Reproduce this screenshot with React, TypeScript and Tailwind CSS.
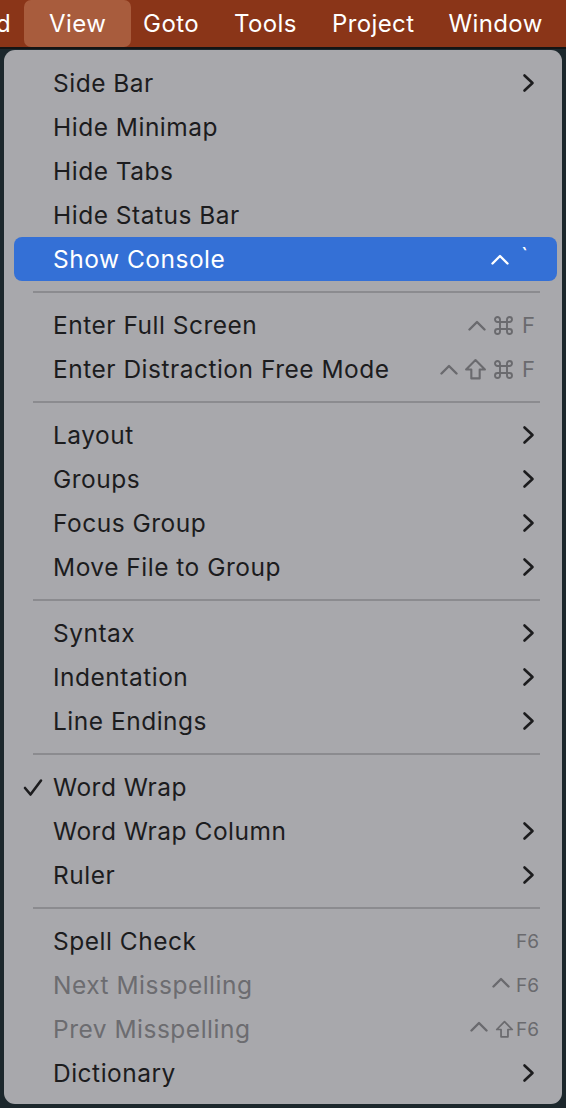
import React from "react";

type Item =
  | { type: "sep" }
  | {
      type: "item";
      label: string;
      sub?: boolean;
      shortcut?: React.ReactNode;
      highlighted?: boolean;
      disabled?: boolean;
      checked?: boolean;
    };

const Caret = ({ color, w = 18 }: { color: string; w?: number }) => (
  <svg width={w} height="12" viewBox="0 0 18 12" fill="none" preserveAspectRatio="none">
    <path d="M1.5 10.5 L9 3 L16.5 10.5" stroke={color} strokeWidth="2.4" strokeLinecap="round" strokeLinejoin="round" />
  </svg>
);

const Shift = ({ color, s = 23 }: { color: string; s?: number }) => (
  <svg width={s} height={s} viewBox="0 0 22 22" fill="none">
    <path d="M11 2 L20 11 L15 11 L15 19.5 L7 19.5 L7 11 L2 11 Z" stroke={color} strokeWidth="2" strokeLinejoin="round" />
  </svg>
);

const Cmd = ({ color }: { color: string }) => (
  <svg width="21" height="21" viewBox="0 0 21 21" fill="none">
    <path
      d="M7 7 L14 7 L14 14 L7 14 Z M7 7 L7 4.5 A2.5 2.5 0 1 0 4.5 7 L7 7 M14 7 L16.5 7 A2.5 2.5 0 1 0 14 4.5 L14 7 M14 14 L14 16.5 A2.5 2.5 0 1 0 16.5 14 L14 14 M7 14 L4.5 14 A2.5 2.5 0 1 0 7 16.5 L7 14"
      stroke={color}
      strokeWidth="1.9"
      strokeLinejoin="round"
    />
  </svg>
);

const Chevron = () => (
  <svg width="13" height="20" viewBox="0 0 13 20" fill="none">
    <path d="M2.5 2.5 L10.5 10 L2.5 17.5" stroke="#1c1c1e" strokeWidth="2.6" strokeLinecap="round" strokeLinejoin="round" />
  </svg>
);

const G = "#6a6a6e";

const items: Item[] = [
  { type: "item", label: "Side Bar", sub: true },
  { type: "item", label: "Hide Minimap" },
  { type: "item", label: "Hide Tabs" },
  { type: "item", label: "Hide Status Bar" },
  {
    type: "item",
    label: "Show Console",
    highlighted: true,
    shortcut: (
      <div className="flex items-center mr-[7px]">
        <Caret color="#ffffff" />
        <span className="ml-[12px] text-[22px] text-white leading-none -mt-[6px]">`</span>
      </div>
    ),
  },
  { type: "sep" },
  {
    type: "item",
    label: "Enter Full Screen",
    shortcut: (
      <div className="flex items-center">
        <Caret color={G} />
        <span className="ml-[7px]"><Cmd color={G} /></span>
        <span className="ml-[8px] text-[22px] leading-none text-[#6a6a6e]">F</span>
      </div>
    ),
  },
  {
    type: "item",
    label: "Enter Distraction Free Mode",
    shortcut: (
      <div className="flex items-center">
        <Caret color={G} />
        <span className="ml-[6px] flex"><Shift color={G} /></span>
        <span className="ml-[6px] flex"><Cmd color={G} /></span>
        <span className="ml-[8px] text-[22px] leading-none text-[#6a6a6e]">F</span>
      </div>
    ),
  },
  { type: "sep" },
  { type: "item", label: "Layout", sub: true },
  { type: "item", label: "Groups", sub: true },
  { type: "item", label: "Focus Group", sub: true },
  { type: "item", label: "Move File to Group", sub: true },
  { type: "sep" },
  { type: "item", label: "Syntax", sub: true },
  { type: "item", label: "Indentation", sub: true },
  { type: "item", label: "Line Endings", sub: true },
  { type: "sep" },
  { type: "item", label: "Word Wrap", checked: true },
  { type: "item", label: "Word Wrap Column", sub: true },
  { type: "item", label: "Ruler", sub: true },
  { type: "sep" },
  {
    type: "item",
    label: "Spell Check",
    shortcut: <span className="text-[19px] text-[#6a6a6e] leading-none -mr-[4px]">F6</span>,
  },
  {
    type: "item",
    label: "Next Misspelling",
    disabled: true,
    shortcut: (
      <div className="flex items-center -mr-[4px]">
        <span className="-mt-[6px] flex"><Caret color={G} /></span>
        <span className="ml-[6px] text-[19px] text-[#6a6a6e] leading-none">F6</span>
      </div>
    ),
  },
  {
    type: "item",
    label: "Prev Misspelling",
    disabled: true,
    shortcut: (
      <div className="flex items-center -mr-[4px]">
        <span className="-mt-[6px] flex"><Caret color={G} /></span>
        <span className="ml-[7px] flex"><Shift color={G} s={19} /></span>
        <span className="ml-[2px] text-[19px] text-[#6a6a6e] leading-none">F6</span>
      </div>
    ),
  },
  { type: "item", label: "Dictionary", sub: true },
];

export default function App() {
  return (
    <div
      className="w-[566px] h-[1108px] bg-[#1c272c] flex flex-col overflow-hidden"
      style={{ fontFamily: "Inter, 'DejaVu Sans', sans-serif" }}
    >
      <div className="h-[47px] bg-[#8a3518] flex items-center text-white text-[24px] tracking-[0.4px] shrink-0 whitespace-nowrap">
        <span className="-ml-[4px] pr-[13px]">d</span>
        <div className="h-[47px] w-[107px] shrink-0 rounded-[7px] bg-[#a85c3d] flex items-center justify-center">
          View
        </div>
        <span className="ml-[12px]">Goto</span>
        <span className="ml-[35px]">Tools</span>
        <span className="ml-[35px]">Project</span>
        <span className="ml-[34px]">Window</span>
      </div>
      <div className="h-[2px] bg-[#141414] shrink-0" />
      <div className="ml-[4px] mr-[4px] mt-[1px] rounded-[11px] bg-[#a8a8ac] pt-[11px] pb-[9px] pl-[10px] pr-[5px] flex flex-col">
        {items.map((it, i) =>
          it.type === "sep" ? (
            <div key={i} className="h-[22px] flex items-center pl-[19px] pr-[17px]">
              <div className="h-[2px] w-full bg-[#8b8b8f]" />
            </div>
          ) : (
            <div
              key={i}
              className={`h-[44px] flex items-center pl-[39px] pr-[22px] rounded-[8px] relative ${
                it.highlighted ? "bg-[#3470d6]" : ""
              }`}
            >
              {it.checked && (
                <svg className="absolute left-[9px] top-[13px]" width="20" height="19" viewBox="0 0 20 19" fill="none">
                  <path d="M2 10 L7.5 16.5 L18 2.5" stroke="#1c1c1e" strokeWidth="2.6" strokeLinecap="round" strokeLinejoin="round" />
                </svg>
              )}
              <span
                className={`text-[24.5px] tracking-[0.5px] leading-none flex-1 whitespace-nowrap ${
                  it.highlighted ? "text-white" : it.disabled ? "text-[#6c6c70]" : "text-[#1c1c1e]"
                }`}
              >
                {it.label}
              </span>
              {it.sub && <Chevron />}
              {it.shortcut}
            </div>
          )
        )}
      </div>
    </div>
  );
}
